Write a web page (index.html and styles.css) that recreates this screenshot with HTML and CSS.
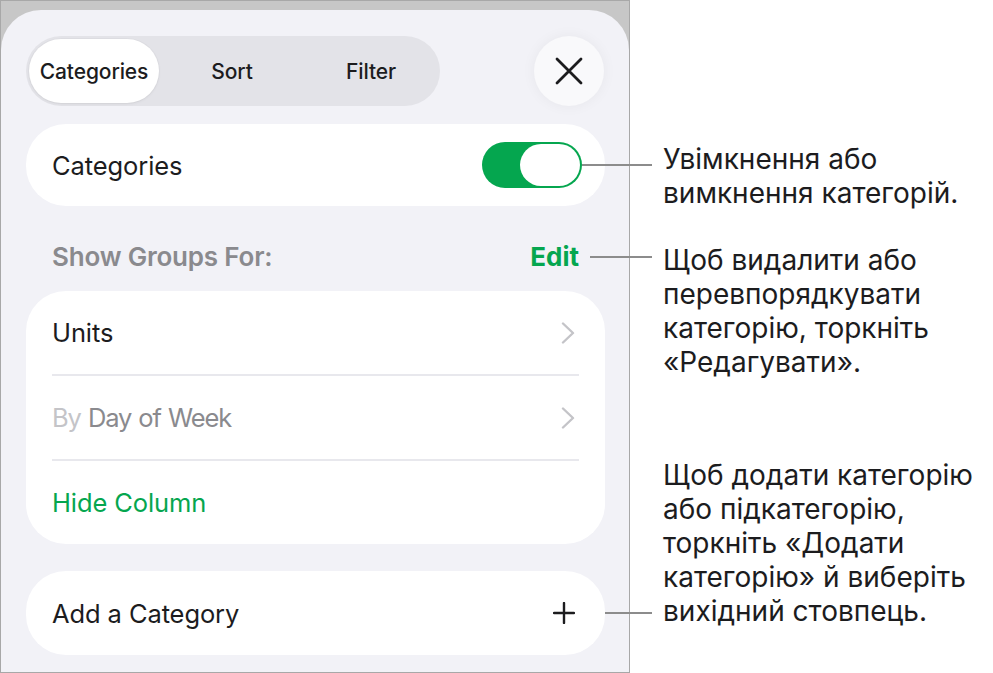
FILE: index.html
```html
<!DOCTYPE html>
<html lang="uk">
<head>
<meta charset="utf-8">
<title>Categories</title>
<link rel="stylesheet" href="styles.css">
</head>
<body>
<div class="page">
  <div class="frame">
    <div class="sheet">
      <div class="header">
        <div class="segmented">
          <div class="seg seg-active">Categories</div>
          <div class="seg seg-sort">Sort</div>
          <div class="seg seg-filter">Filter</div>
        </div>
        <div class="close">
          <svg width="28" height="28" viewBox="0 0 28 28"><path d="M2 2 L26 26 M26 2 L2 26" stroke="#1c1c1e" stroke-width="2.8" stroke-linecap="round"/></svg>
        </div>
      </div>

      <div class="card card-single">
        <span class="label">Categories</span>
        <div class="toggle"><div class="knob"></div></div>
      </div>

      <div class="section-head">
        <span class="section-title">Show Groups For:</span>
        <span class="edit">Edit</span>
      </div>

      <div class="card card-group">
        <div class="row">
          <span class="label">Units</span>
          <svg class="chev" width="14" height="22" viewBox="0 0 14 22"><path d="M2 1.5 L12 11 L2 20.5" fill="none" stroke="#c4c4c8" stroke-width="2.4" stroke-linecap="round" stroke-linejoin="round"/></svg>
        </div>
        <div class="sep"></div>
        <div class="row">
          <span class="label label-tight"><span class="by">By</span> <span class="dim">Day of Week</span></span>
          <svg class="chev" width="14" height="22" viewBox="0 0 14 22"><path d="M2 1.5 L12 11 L2 20.5" fill="none" stroke="#c4c4c8" stroke-width="2.4" stroke-linecap="round" stroke-linejoin="round"/></svg>
        </div>
        <div class="sep"></div>
        <div class="row">
          <span class="label green">Hide Column</span>
        </div>
      </div>

      <div class="card card-single card-add">
        <span class="label">Add a Category</span>
        <svg class="plus" width="22" height="22" viewBox="0 0 22 22"><path d="M11 1 V21 M1 11 H21" stroke="#1c1c1e" stroke-width="2.4" stroke-linecap="round"/></svg>
      </div>
    </div>
  </div>

  <div class="callout-line line1"></div>
  <div class="callout-line line2"></div>
  <div class="callout-line line3"></div>

  <div class="note note1">Увімкнення або<br>вимкнення категорій.</div>
  <div class="note note2">Щоб видалити або<br>перевпорядкувати<br>категорію, торкніть<br>«Редагувати».</div>
  <div class="note note3">Щоб додати категорію<br>або підкатегорію,<br>торкніть «Додати<br>категорію» й виберіть<br>вихідний стовпець.</div>
</div>
</body>
</html>
```

FILE: styles.css
```css
* { box-sizing: border-box; }
html, body {
  margin: 0;
  padding: 0;
  background: #ffffff;
}
body {
  font-family: Inter, "Noto Sans", "Liberation Sans", sans-serif;
  color: #1c1c1e;
}
.page {
  position: relative;
  width: 993px;
  height: 673px;
}
.frame {
  width: 630px;
  height: 673px;
  border: 1px solid #a8a8a8;
  background: #c7c7c7;
  padding-top: 9px;
  display: flex;
  flex-direction: column;
}
.sheet {
  flex: 1;
  background: #f2f2f7;
  border-radius: 40px 40px 0 0;
  padding: 25px 24px 0 25px;
  display: flex;
  flex-direction: column;
}
.header {
  display: flex;
  align-items: center;
  justify-content: space-between;
  height: 72px;
}
.segmented {
  width: 414px;
  height: 70px;
  border-radius: 35px;
  background: #e3e3e8;
  padding: 3px;
  display: grid;
  grid-template-columns: 130px 146px 1fr;
  align-items: center;
}
.seg {
  height: 64px;
  display: flex;
  align-items: center;
  justify-content: center;
  font-size: 21px;
  font-weight: 500;
  color: #1c1c1e;
  letter-spacing: -0.1px;
}
.seg-active {
  background: #ffffff;
  border-radius: 32px;
  box-shadow: 0 0 0 1px rgba(0,0,0,0.02), 0 1px 3px rgba(0,0,0,0.06);
}
.close {
  width: 70px;
  height: 70px;
  border-radius: 50%;
  background: #f9f9fb;
  box-shadow: 0 0 14px rgba(0,0,0,0.05);
  display: flex;
  align-items: center;
  justify-content: center;
  margin-right: 1px;
}
.card {
  background: #ffffff;
  border-radius: 40px;
}
.card-single {
  height: 82px;
  margin-top: 17px;
  display: flex;
  align-items: center;
  justify-content: space-between;
  padding: 0 23px 0 26px;
}
.label {
  font-size: 25.5px;
  color: #1c1c1e;
  letter-spacing: -0.1px;
}
.label-tight {
  letter-spacing: -1.1px;
  word-spacing: 1px;
}
.toggle {
  position: relative;
  width: 100px;
  height: 46px;
  border-radius: 23px;
  background: #05a64f;
}
.knob {
  position: absolute;
  right: 2px;
  top: 2px;
  width: 60px;
  height: 42px;
  border-radius: 21px;
  background: #ffffff;
}
.section-head {
  height: 85px;
  padding: 16px 26px 0 26px;
  display: flex;
  align-items: center;
  justify-content: space-between;
}
.section-title {
  font-size: 26px;
  font-weight: 600;
  color: #8a8a8e;
  letter-spacing: -0.2px;
}
.edit {
  font-size: 26px;
  font-weight: 700;
  color: #05a64f;
}
.card-group {
  display: flex;
  flex-direction: column;
  padding: 0 26px;
}
.row {
  height: 83px;
  display: flex;
  align-items: center;
  justify-content: space-between;
  padding-right: 4px;
}
.sep {
  height: 2px;
  background: #e8e8ed;
}
.by { color: #c4c4c8; }
.dim { color: #8a8a8e; }
.green { color: #05a64f; }
.card-add {
  margin-top: 27px;
  height: 84px;
  padding-right: 30px;
}
.callout-line {
  position: absolute;
  height: 2px;
  background: #8c8c8c;
}
.line1 { left: 582px; width: 70px; top: 164px; }
.line2 { left: 590px; width: 62px; top: 256px; }
.line3 { left: 605px; width: 47px; top: 612px; }
.note {
  position: absolute;
  left: 663px;
  font-size: 28px;
  line-height: 34px;
  color: #1c1c1e;
  white-space: nowrap;
}
.note1 { top: 142px; }
.note2 { top: 243px; }
.note3 { top: 458px; }
```
